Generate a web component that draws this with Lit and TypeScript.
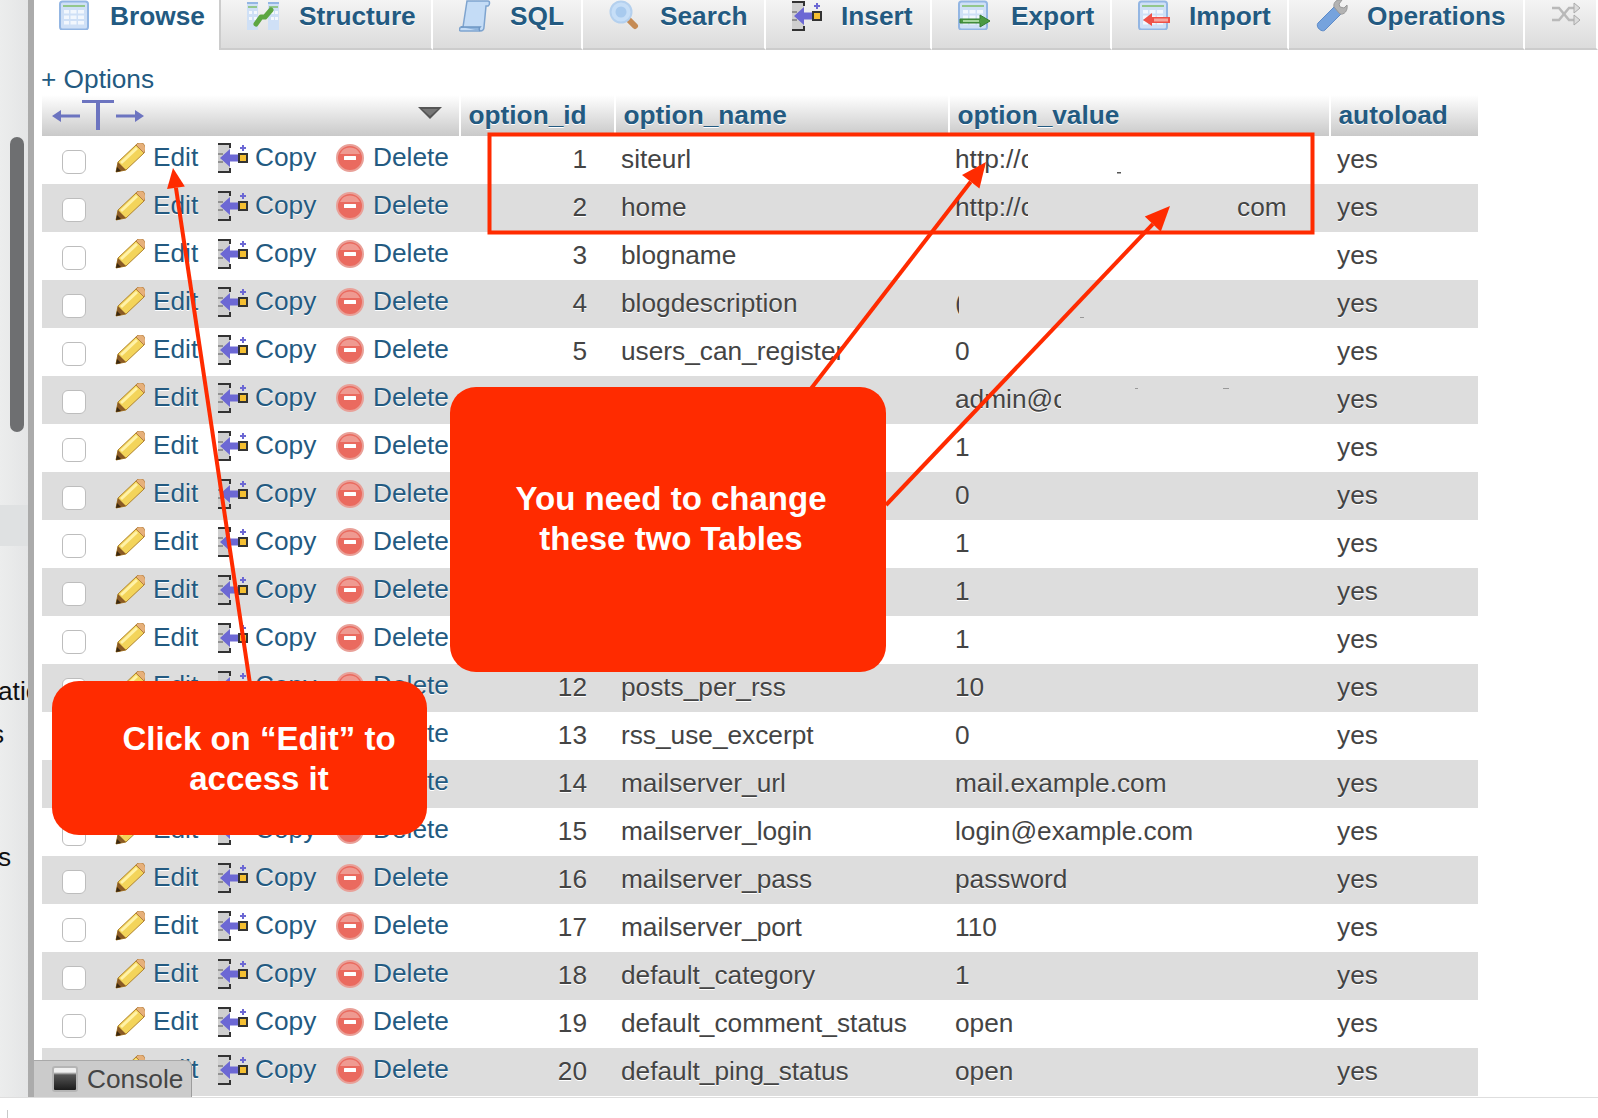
import { LitElement, html, svg, css } from "lit";
import { customElement } from "lit/decorators.js";

const tableBase = svg`
  <rect x="1" y="1.5" width="28" height="28" rx="2.5" fill="#cfe0f6" stroke="#93b6e3" stroke-width="2"/>
  <rect x="4" y="5" width="22" height="2" fill="#93c78c"/>
  <g fill="#f2f7fd"><rect x="5" y="10" width="5" height="3.5"/><rect x="11.5" y="10" width="6" height="3.5"/><rect x="19" y="10" width="6" height="3.5"/>
  <rect x="5" y="15.5" width="5" height="3.5"/><rect x="11.5" y="15.5" width="6" height="3.5"/><rect x="19" y="15.5" width="6" height="3.5"/>
  <rect x="5" y="21" width="5" height="3.5"/><rect x="11.5" y="21" width="6" height="3.5"/><rect x="19" y="21" width="6" height="3.5"/></g>`;

const copyShape = svg`
  <path d="M0 3 H12 V11 L6 16 L12 21 V29 H0 Z" fill="#cfcfcf"/>
  <path d="M0 2 H12 V6 M0 30 H12 V26" fill="none" stroke="#333" stroke-width="2"/>
  <path d="M0 12 H5 M0 20 H5" stroke="#555" stroke-width="1"/>
  <path d="M2 16 L12 7 V12.5 H20 V19.5 H12 V25 Z" fill="#6c68d4"/>
  <rect x="21" y="12" width="8" height="8" fill="#f5bf32" stroke="#333" stroke-width="2"/>
  <path d="M25 3 V9 M22 6 H28" stroke="#6c68d4" stroke-width="2"/>`;

const icons: Record<string, unknown> = {
  browse: html`<svg class="ti" viewBox="0 0 30 30" width="30" height="30">${tableBase}</svg>`,
  structure: html`<svg class="ti" viewBox="0 0 32 30" width="32" height="30">
    <rect x="0" y="2" width="11" height="28" fill="#cfe0f6"/><rect x="0" y="2" width="11" height="2" fill="#93b6e3"/><rect x="1" y="6" width="9" height="2" fill="#93c78c"/>
    <g fill="#f4f8fd"><rect x="2" y="11" width="3" height="3"/><rect x="7" y="11" width="3" height="3"/><rect x="2" y="17" width="3" height="3"/><rect x="7" y="17" width="3" height="3"/></g>
    <rect x="21" y="2" width="11" height="28" fill="#cfe0f6"/><rect x="21" y="2" width="11" height="2" fill="#93b6e3"/><rect x="22" y="6" width="9" height="2" fill="#93c78c"/>
    <g fill="#f4f8fd"><rect x="24" y="11" width="3" height="3"/><rect x="28" y="11" width="3" height="3"/><rect x="24" y="17" width="3" height="3"/><rect x="28" y="17" width="3" height="3"/></g>
    <path d="M9 24 L14 17 L18 17 L24 10" fill="none" stroke="#5da642" stroke-width="5" stroke-linecap="round" stroke-linejoin="round"/></svg>`,
  sql: html`<svg class="ti" viewBox="0 0 32 32" width="32" height="32">
    <path d="M8 1 H29 C31 1 31 5 29 6 L27 6 L25 27 C25 30 23 31 21 31 H2 C0 31 0 28 2 27 H4 Z" fill="#c4dcf6" stroke="#7ea4cf" stroke-width="1.5"/>
    <path d="M2 27 H21 C20 28 20 30 21 31" fill="#8fb4dc" stroke="#6d96c4" stroke-width="1.5"/></svg>`,
  search: html`<svg class="ti" viewBox="0 0 30 30" width="30" height="30">
    <line x1="19" y1="19" x2="26" y2="26" stroke="#c58b55" stroke-width="6" stroke-linecap="round"/>
    <circle cx="12" cy="12" r="10.5" fill="#c6def7" stroke="#b4d0ee" stroke-width="2"/><circle cx="12" cy="12" r="5.5" fill="#a8caee"/></svg>`,
  insert: html`<svg class="ti" viewBox="0 0 30 32" width="30" height="32">${copyShape}</svg>`,
  export: html`<svg class="ti" viewBox="0 0 33 30" width="33" height="30">${tableBase}
    <path d="M2 19 H22 V15 L32 21 L22 27 V23 H2 Z" fill="#4c9a43" stroke="#357f33" stroke-width="1"/><rect x="5" y="20" width="16" height="2" fill="#a6d79e"/></svg>`,
  import: html`<svg class="ti" viewBox="0 0 33 30" width="33" height="30">${tableBase}
    <path d="M32 17 H14 V13 L5 20 L14 26 V23 H32 Z" fill="#ef5148"/><rect x="16" y="18.5" width="14" height="3" fill="#f7a69e"/></svg>`,
  operations: html`<svg class="ti" viewBox="0 0 34 32" width="34" height="32">
    <path d="M3 23 L19 7 L26 14 L10 30 C7 33 0 27 3 23 Z" fill="#76a3dd" stroke="#5d8bc8" stroke-width="1"/>
    <path d="M19 7 C18 2 22 -1 27 0 L24 4 L25 7 L29 8 L32 5 C33 11 29 15 25 14 Z" fill="#b3b3b3" stroke="#999" stroke-width="1"/></svg>`,
  shuffle: html`<svg class="ti" viewBox="0 0 30 28" width="30" height="28">
    <g fill="none" stroke="#b9b9b9" stroke-width="2.5"><path d="M1 8 H8 L18 20 H24"/><path d="M1 20 H8 L18 8 H24"/></g>
    <path d="M23 3 L29 8 L23 13 Z M23 15 L29 20 L23 25 Z" fill="#dcdcdc" stroke="#aaa" stroke-width="1"/></svg>`,
};

const pencil = html`<svg class="ic" viewBox="0 0 30 30" width="30" height="30">
  <path d="M1 29 L3 19 L21 2 L29 10 L11 27 Z" fill="#f3d45a" stroke="#b0842e" stroke-width="1"/>
  <path d="M6 20 L22 5" stroke="#fff2a8" stroke-width="3"/>
  <path d="M21 2 C23 -1 27 -1 29 1.5 C31 4 31 7 29 10 Z" fill="#e6b07a" stroke="#b47f3f" stroke-width="1"/>
  <path d="M1 29 L3 19 L11 27 Z" fill="#8a5a24"/><path d="M1 29 L2 24 L6 28 Z" fill="#3a2810"/></svg>`;

const copyIcon = html`<svg class="ic" viewBox="0 0 30 32" width="30" height="32">${copyShape}</svg>`;

const delIcon = html`<svg class="ic" viewBox="0 0 28 28" width="28" height="28">
  <circle cx="14" cy="14" r="13" fill="#ea6a5f" stroke="#e9a098" stroke-width="2"/>
  <path d="M4 10 A11 11 0 0 1 24 10 Z" fill="#ef9a91"/>
  <rect x="8" y="12" width="12" height="4" rx="0.5" fill="#fff"/></svg>`;

const tabs = [
  { label: "Browse", icon: "browse", slot: 51, active: true },
  { label: "Structure", icon: "structure", slot: 52 },
  { label: "SQL", icon: "sql", slot: 51 },
  { label: "Search", icon: "search", slot: 51 },
  { label: "Insert", icon: "insert", slot: 49 },
  { label: "Export", icon: "export", slot: 53 },
  { label: "Import", icon: "import", slot: 51 },
  { label: "Operations", icon: "operations", slot: 52 },
  { label: "", icon: "shuffle", slot: 30 },
];

type Row = [number, string, string, number?, number?];
const rows: Row[] = [
  [1, "siteurl", "http://c", 73],
  [2, "home", "http://c", 73, 209],
  [3, "blogname", ""],
  [4, "blogdescription", "(", 4],
  [5, "users_can_register", "0"],
  [6, "admin_email", "admin@c", 106],
  [7, "start_of_week", "1"],
  [8, "use_balanceTags", "0"],
  [9, "use_smilies", "1"],
  [10, "require_name_email", "1"],
  [11, "comments_notify", "1"],
  [12, "posts_per_rss", "10"],
  [13, "rss_use_excerpt", "0"],
  [14, "mailserver_url", "mail.example.com"],
  [15, "mailserver_login", "login@example.com"],
  [16, "mailserver_pass", "password"],
  [17, "mailserver_port", "110"],
  [18, "default_category", "1"],
  [19, "default_comment_status", "open"],
  [20, "default_ping_status", "open"],
];

function head(x1: number, y1: number, x2: number, y2: number, len: number, half: number) {
  const d = Math.hypot(x2 - x1, y2 - y1);
  const ux = (x2 - x1) / d, uy = (y2 - y1) / d;
  const bx = x2 - ux * len, by = y2 - uy * len;
  return {
    pts: `${x2},${y2} ${bx - uy * half},${by + ux * half} ${bx + uy * half},${by - ux * half}`,
    bx, by,
  };
}
const arrows = [
  [250, 684, 173, 168, 20, 9],
  [810, 390, 986, 162, 25, 11],
  [886, 505, 1170, 206, 25, 11],
];

@customElement("app-root")
export class AppRoot extends LitElement {
  static styles = css`
    :host { display: block; width: 1598px; height: 1118px; position: relative; overflow: hidden; background: #fff;
      font-family: "Liberation Sans", Arial, sans-serif; font-size: 26.25px; color: #444; }
    .top { display: flex; height: 1097px; }
    .side { width: 28px; flex: none; overflow: hidden; padding-top: 505px; position: relative;
      background: linear-gradient(90deg, #eceded, #e4e5e6); border-right: 6px solid #ababab; box-sizing: content-box; height: 592px; color: #111; white-space: nowrap; }
    .thumb { position: absolute; left: 10px; top: 137px; width: 14px; height: 295px; border-radius: 7px; background: #6e6f71; }
    .band { height: 41px; background: #dfe1e2; margin-bottom: 130px; }
    .st { height: 30px; line-height: 30px; }
    .s1 { margin-left: -2px; }
    .s2 { margin-left: -9px; margin-top: 13px; }
    .s3 { margin-left: -2px; margin-top: 93px; }
    .main { flex: 1; min-width: 0; }
    .tabs { display: grid; grid-template-columns: 187px 212px 150px 183px 166px 180px 177px 236px 1fr; height: 50px; }
    .tab { display: flex; align-items: flex-start; box-sizing: border-box; height: 50px; padding-left: 26px; overflow: hidden;
      background: linear-gradient(#f4f4f4, #dcdcdc); border-bottom: 2px solid #ccc; border-right: 2px solid #fff;
      color: #235a81; font-weight: 700; line-height: 33px; text-shadow: 0 1px 0 #fff; }
    .tab.active { background: #fff; border-bottom: none; border-right: 2px solid #ccc; padding-left: 25px; }
    .slot { flex: none; height: 33px; }
    .ti { display: block; }
    .options { height: 45px; box-sizing: border-box; padding: 11px 0 0 7px; line-height: 36px; color: #235a81; white-space: nowrap; }
    table { margin-left: 8px; width: 1436px; table-layout: fixed; border-collapse: collapse; border-spacing: 0; }
    th { height: 41px; padding: 0 0 0 7.5px; text-align: left; font-weight: 700; color: #235a81; text-shadow: 0 1px 0 #fff;
      background: linear-gradient(#fff, #c9c9c9); border-left: 2px solid #fff; line-height: 40px; vertical-align: top; overflow: hidden; }
    th:first-child { border-left: none; padding: 0; }
    .hctl { display: flex; justify-content: space-between; width: 400px; height: 41px; }
    .hT { margin: 0 0 0 10px; }
    .hV { margin: 12px 0 0 0; }
    td { height: 48px; padding: 0 0 0 6px; line-height: 46px; white-space: nowrap; overflow: hidden; vertical-align: top; }
    td:first-child { padding: 0; }
    tr.alt td { background: #ddd; text-shadow: 0 1px 0 #fff; }
    .num { text-align: right; padding-right: 28px; }
    .yes { padding-left: 7px; }
    .acts { display: grid; grid-template-columns: 54px 102px 118px auto; padding-left: 20px; height: 48px; align-items: start; }
    .cb { width: 24px; height: 24px; box-sizing: border-box; margin-top: 14px; background: #fff; border: 1px solid #bdbdbd; border-radius: 6px; }
    .act { display: flex; align-items: center; gap: 7px; height: 42px; color: #235a81; line-height: 42px; }
    .act.del { gap: 9px; }
    .ic { display: block; flex: none; margin-top: 1px; }
    .act:nth-child(2) .ic { margin-left: -1px; margin-right: 1px; }
    .val { display: flex; }
    .clip { display: block; overflow: hidden; flex: none; }
    .over { position: absolute; inset: 0; width: 1598px; height: 1118px; pointer-events: none; }
    .callout { position: absolute; box-sizing: border-box; background: #ff2b00; color: #fff; font-weight: 700; text-align: center;
      font-size: 33px; line-height: 40px; }
    .c1 { left: 450px; top: 387px; width: 436px; height: 285px; border-radius: 26px; padding: 92px 0 0 6px; }
    .c2 { left: 52px; top: 681px; width: 375px; height: 154px; border-radius: 27px; padding: 38px 0 0 39px; }
    .console { position: absolute; left: 34px; top: 1060px; width: 158px; height: 37px; box-sizing: border-box;
      background: #cbcbcb; border-top: 1px solid #a9a9a9; border-right: 1px solid #9c9c9c; border-top-right-radius: 6px;
      display: flex; align-items: center; gap: 9px; padding-left: 18px; line-height: 34px; color: #444; }
    .cicon { width: 26px; height: 26px; box-sizing: border-box; border: 2px solid #b5b5b5; border-radius: 3px; flex: none;
      background: linear-gradient(#f0f0f0 0 4px, #555 7px, #1c1c1c); }
    .foot { height: 21px; border-top: 1px solid #dedede; box-sizing: border-box; padding: 12px 0 0 7px; }
    .tick { width: 1px; height: 8px; background: #c8c8c8; }
  `;

  private hIcon() {
    return html`<div class="hctl">
      <svg class="hT" viewBox="0 0 100 36" width="100" height="36">
        <g fill="#6c74c0">
          <path d="M30 5 H62 V8 H48 V35 H44 V8 H30 Z"/>
          <path d="M0 21 L9 15 V19.5 H28 V22.5 H9 V27 Z"/>
          <path d="M92 21 L83 15 V19.5 H64 V22.5 H83 V27 Z"/>
        </g></svg>
      <svg class="hV" viewBox="0 0 24 13" width="24" height="13">
        <path d="M0 0 H24 L12 12 Z" fill="#555"/><path d="M4 2 H20 L12 9 Z" fill="#777"/></svg>
    </div>`;
  }

  render() {
    return html`
      <div class="top">
        <div class="side">
          <div class="thumb"></div>
          <div class="band"></div>
          <div class="st s1">atic</div>
          <div class="st s2">s</div>
          <div class="st s3">s</div>
        </div>
        <div class="main">
          <div class="tabs">
            ${tabs.map((t) => html`<div class="tab ${t.active ? "active" : ""}">
              <div class="slot" style="width:${t.slot}px">${icons[t.icon]}</div>${t.label}
            </div>`)}
          </div>
          <div class="options">+ Options</div>
          <table>
            <colgroup><col style="width:418px"/><col style="width:155px"/><col style="width:334px"/><col style="width:381px"/><col style="width:148px"/></colgroup>
            <thead><tr><th>${this.hIcon()}</th><th>option_id</th><th>option_name</th><th>option_value</th><th>autoload</th></tr></thead>
            <tbody>
              ${rows.map((r, i) => html`<tr class="${i % 2 ? "alt" : ""}">
                <td><div class="acts">
                  <div class="cb"></div>
                  <div class="act">${pencil}<span>Edit</span></div>
                  <div class="act">${copyIcon}<span>Copy</span></div>
                  <div class="act del">${delIcon}<span>Delete</span></div>
                </div></td>
                <td class="num">${r[0]}</td>
                <td>${r[1]}</td>
                <td><div class="val">
                  ${r[3] ? html`<span class="clip" style="width:${r[3]}px">${r[2]}</span>` : html`<span>${r[2]}</span>`}
                  ${r[4] ? html`<span style="margin-left:${r[4]}px">com</span>` : ""}
                </div></td>
                <td class="yes">yes</td>
              </tr>`)}
            </tbody>
          </table>
        </div>
      </div>
      <div class="foot"><div class="tick"></div></div>
      <div class="console"><div class="cicon"></div>Console</div>
      <svg class="over" viewBox="0 0 1598 1118">
        <rect x="489.5" y="134.5" width="823" height="98" fill="none" stroke="#ff2b00" stroke-width="4"/>
        <g fill="#555"><rect x="1117" y="172" width="4" height="1.5"/><rect x="1080" y="317" width="4" height="1" fill="#999"/><rect x="1135" y="388" width="3" height="1" fill="#999"/><rect x="1223" y="388" width="6" height="1" fill="#999"/></g>
        ${arrows.map(([x1, y1, x2, y2, l, w]) => {
          const h = head(x1, y1, x2, y2, l, w);
          return svg`<line x1="${x1}" y1="${y1}" x2="${h.bx}" y2="${h.by}" stroke="#ff2b00" stroke-width="4"/><polygon points="${h.pts}" fill="#ff2b00"/>`;
        })}
      </svg>
      <div class="callout c1">You need to change<br/>these two Tables</div>
      <div class="callout c2">Click on “Edit” to<br/>access it</div>
    `;
  }
}
